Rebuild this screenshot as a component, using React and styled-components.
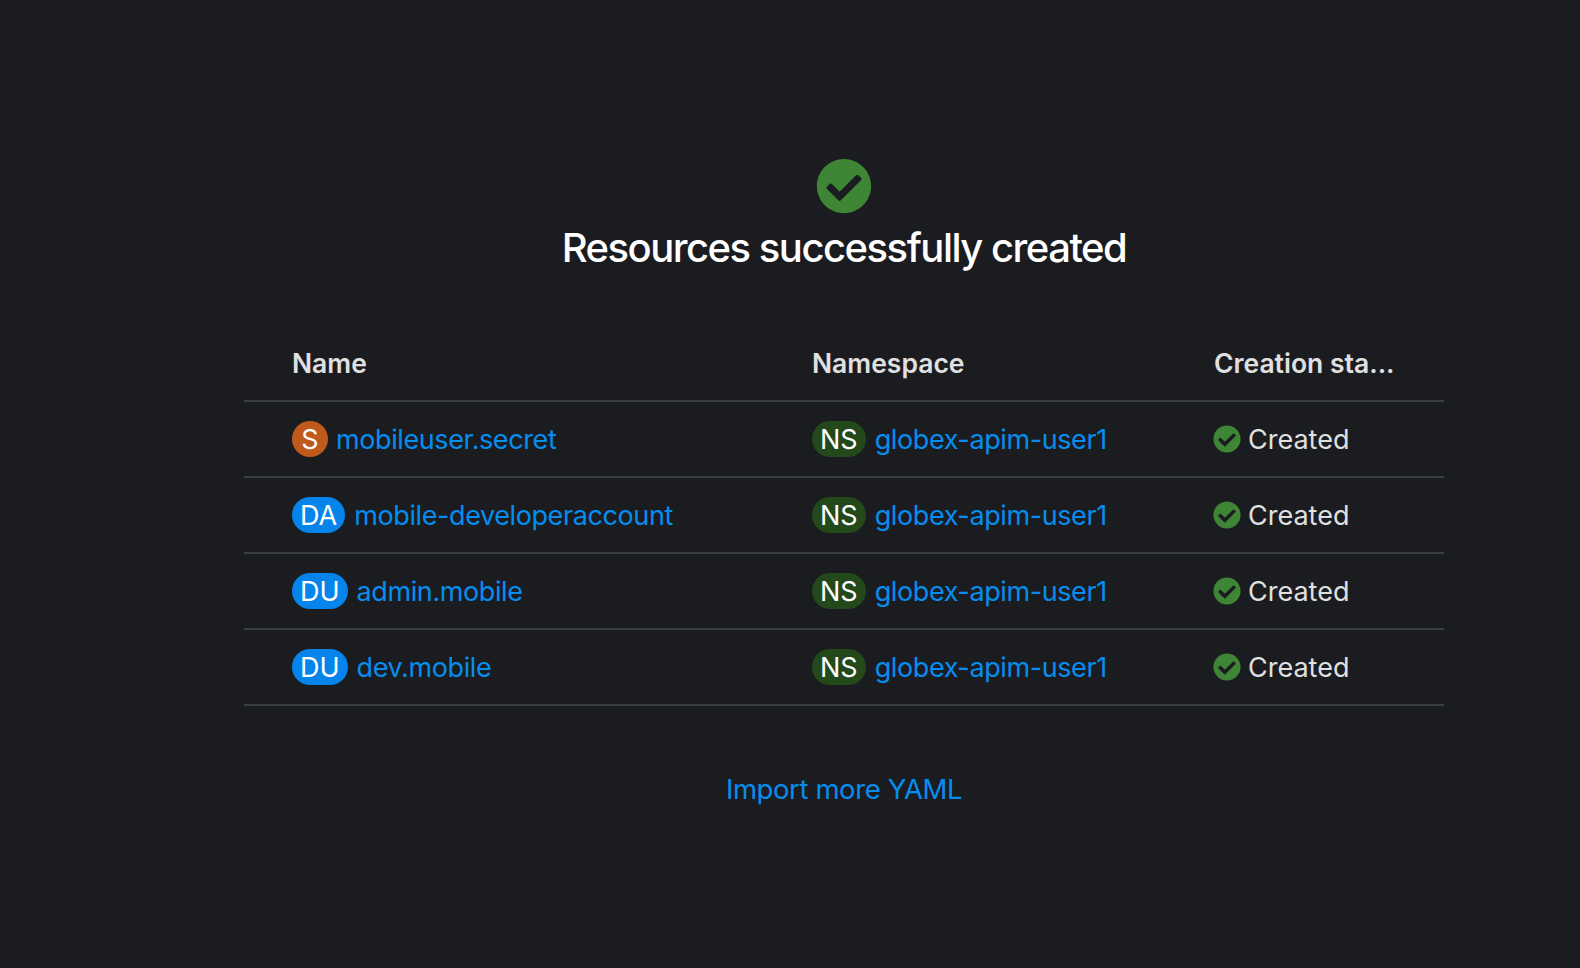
import React from "react";
import styled, { createGlobalStyle } from "styled-components";
import { FaCheckCircle } from "react-icons/fa";

const GlobalStyle = createGlobalStyle`
html, body {
  margin: 0;
  background-color: #1a1c20;
  font-family: Inter, "Liberation Sans", sans-serif;
}
`;

const Page = styled.div`
  height: 968px;
  padding: 158px 136px 0 244px;
  box-sizing: border-box;
  overflow: hidden;
`;
const Header = styled.div`
  display: flex;
  flex-direction: column;
  align-items: center;
`;
const HeaderIcon = styled(FaCheckCircle)`
  width: 56px;
  height: 56px;
  color: #3e8635;
  display: block;
`;
const Title = styled.h1`
  margin: 9px 0 0;
  color: #fff;
  font-size: 40px;
  line-height: 50px;
  font-weight: 500;
  letter-spacing: -1.5px;
`;
const Table = styled.div`
  margin-top: 53px;
`;
const Row = styled.div`
  display: grid;
  grid-template-columns: 520px 402px 1fr;
  align-items: center;
  height: 76px;
  padding-left: 48px;
  box-sizing: border-box;
  border-bottom: 2px solid #3c3f42;
`;
const HeadCell = styled.div`
  color: #e0e0e0;
  font-size: 26.5px;
  font-weight: 600;
  white-space: nowrap;
`;
const Cell = styled.div`
  display: flex;
  align-items: center;
  font-size: 27px;
  white-space: nowrap;
`;
const Badge = styled.span`
  display: inline-flex;
  align-items: center;
  justify-content: center;
  min-width: 36px;
  height: 36px;
  padding: 0 8px;
  box-sizing: border-box;
  border-radius: 18px;
  margin-right: ${(p) => (p.$wide ? "9px" : "8px")};
  color: #fff;
  font-size: 27px;
  background-color: ${(p) => p.$bg};
`;
const ResourceLink = styled.a`
  color: #058eef;
  text-decoration: none;
  letter-spacing: -0.4px;
`;
const StatusIcon = styled(FaCheckCircle)`
  width: 28px;
  height: 28px;
  color: #3e8635;
  margin: 0 7px 0 -1px;
`;
const StatusText = styled.span`
  color: #e0e0e0;
`;
const Footer = styled.div`
  margin-top: 66px;
  text-align: center;
  font-size: 27.5px;
`;

const BADGE_COLORS = { S: "#c0591c", DA: "#0584ec", DU: "#0584ec", NS: "#23491b" };

const RESOURCES = [
  { kind: "S", name: "mobileuser.secret" },
  { kind: "DA", name: "mobile-developeraccount" },
  { kind: "DU", name: "admin.mobile" },
  { kind: "DU", name: "dev.mobile" },
];

export default function App() {
  return (
    <Page>
      <GlobalStyle />
      <Header>
        <HeaderIcon />
        <Title>Resources successfully created</Title>
      </Header>
      <Table>
        <Row>
          <HeadCell>Name</HeadCell>
          <HeadCell>Namespace</HeadCell>
          <HeadCell>Creation sta...</HeadCell>
        </Row>
        {RESOURCES.map((r) => (
          <Row key={r.name}>
            <Cell>
              <Badge $bg={BADGE_COLORS[r.kind]} $wide={r.kind.length > 1}>{r.kind}</Badge>
              <ResourceLink>{r.name}</ResourceLink>
            </Cell>
            <Cell>
              <Badge $bg={BADGE_COLORS.NS} $wide>NS</Badge>
              <ResourceLink>globex-apim-user1</ResourceLink>
            </Cell>
            <Cell>
              <StatusIcon />
              <StatusText>Created</StatusText>
            </Cell>
          </Row>
        ))}
      </Table>
      <Footer>
        <ResourceLink>Import more YAML</ResourceLink>
      </Footer>
    </Page>
  );
}
